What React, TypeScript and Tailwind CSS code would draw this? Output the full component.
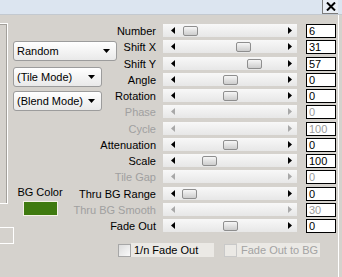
import React from 'react'

/* ── Data ──────────────────────────────────────────── */

type Row = { label: string; value: string; thumb?: number }

// thumb = offset of the slider knob from the track's left edge (px)
const ROWS: Row[] = [
  { label: 'Number', value: '6', thumb: 20 },
  { label: 'Shift X', value: '31', thumb: 73 },
  { label: 'Shift Y', value: '57', thumb: 84 },
  { label: 'Angle', value: '0', thumb: 60 },
  { label: 'Rotation', value: '0', thumb: 60 },
  { label: 'Phase', value: '0' },
  { label: 'Cycle', value: '100' },
  { label: 'Attenuation', value: '0', thumb: 60 },
  { label: 'Scale', value: '100', thumb: 39 },
  { label: 'Tile Gap', value: '0' },
  { label: 'Thru BG Range', value: '0', thumb: 19 },
  { label: 'Thru BG Smooth', value: '30' },
  { label: 'Fade Out', value: '0', thumb: 60 },
]

/* ── Bits ──────────────────────────────────────────── */

function Arrow({ dir, muted }: { dir: 'left' | 'right'; muted?: boolean }) {
  const fill = muted ? '#a8a8a8' : '#000'
  return (
    <svg width="4" height="7" viewBox="0 0 4 7" className="shrink-0">
      {dir === 'left' ? <path d="M4 0 L0 3.5 L4 7 Z" fill={fill} /> : <path d="M0 0 L4 3.5 L0 7 Z" fill={fill} />}
    </svg>
  )
}

function Select({ label, width }: { label: string; width: string }) {
  return (
    <div className={`flex h-[20px] ${width} items-center justify-between rounded-[3px] border border-[#9c9c9c] bg-linear-to-b from-white to-[#e9e9e9] pl-[3px] pr-[6px] text-black`}>
      <span className="whitespace-nowrap">{label}</span>
      <svg width="7" height="4" viewBox="0 0 7 4" className="shrink-0">
        <path d="M0 0 H7 L3.5 4 Z" fill="#000" />
      </svg>
    </div>
  )
}

function SliderRow({ row }: { row: Row }) {
  const disabled = row.thumb === undefined
  return (
    <div className="flex h-[16.25px] items-start">
      <div className={`w-[86px] shrink-0 whitespace-nowrap text-right leading-[14px] ${disabled ? 'text-[#a0a0a0]' : 'text-black'}`}>
        {row.label}
      </div>
      <div className="relative ml-[7px] flex h-[13px] w-[134px] shrink-0 items-center justify-between bg-linear-to-b from-[#f8f8f8] to-[#e7e7e7] pl-[8px] pr-[5px]">
        <Arrow dir="left" muted={disabled} />
        <Arrow dir="right" muted={disabled} />
        {!disabled && (
          <div
            className="absolute top-[2px] h-[10px] w-[15px] rounded-[2px] border border-[#8e8e8e] bg-linear-to-b from-[#f6f6f6] to-[#cdcdcd]"
            style={{ left: row.thumb }}
          />
        )}
      </div>
      <div className={`ml-[9px] h-[14px] w-[30px] shrink-0 border border-black bg-white pl-[2px] leading-[12px] ${disabled ? 'text-[#9a9a9a]' : 'text-black'}`}>
        {row.value}
      </div>
    </div>
  )
}

/* ── Page ──────────────────────────────────────────── */

export default function App() {
  return (
    <div
      className="flex h-[277px] w-[342px] flex-col overflow-hidden bg-[#d5d2cd] text-[11px]"
      style={{ fontFamily: '"Liberation Sans", Arial, sans-serif' }}
    >
      {/* Title band */}
      <div className="flex h-[15px] shrink-0 justify-end border-b border-[#c3c9d0] bg-[#dce5f0]">
        <div className="mr-[4px] flex h-[14px] w-[16px] items-center justify-center border-b border-l border-[#7d7d7d] bg-[#e9eef5]">
          <svg width="10" height="9" viewBox="0 0 10 9">
            <path d="M1 0.5 L9 8.5 M9 0.5 L1 8.5" stroke="#000" strokeWidth="2" />
          </svg>
        </div>
      </div>

      <div className="flex flex-1">
        {/* Left column (dropdowns overhang into the label gutter) */}
        <div className="relative z-10 flex w-[70px] shrink-0 flex-col">
          <div className="flex">
            <div className="mt-[8px] h-[181px] w-[8px] shrink-0 border-y border-r border-white shadow-[inset_-1px_1px_0_#a3a09b]" />
            <div className="ml-[5px] mt-[26px] flex flex-col">
              <Select label="Random" width="w-[104px]" />
              <div className="mt-[6px]">
                <Select label="(Tile Mode)" width="w-[89px]" />
              </div>
              <div className="mt-[4px]">
                <Select label="(Blend Mode)" width="w-[89px]" />
              </div>
              <div className="mt-[74px] flex w-[54px] flex-col items-center">
                <span className="whitespace-nowrap leading-[14px] text-black">BG Color</span>
                <div className="mt-[2px] h-[15px] w-[35px] border border-[#f4f2e6] bg-[#3f7a0f]" />
              </div>
            </div>
          </div>
          <div className="mt-[11px] h-[17px] w-[14px] border-y border-r border-white" />
        </div>

        {/* Sliders */}
        <div className="flex w-[266px] shrink-0 flex-col pt-[9px]">
          {ROWS.map((row) => (
            <SliderRow key={row.label} row={row} />
          ))}

          <div className="ml-[48px] mt-[8px] flex items-center">
            <div className="h-[13px] w-[13px] border border-[#a7a7a7] bg-linear-to-br from-[#dcdcdc] to-[#fafafa]" />
            <div className="h-[14px] w-[83px] bg-[#ebe9e5] pl-[3px] leading-[14px] text-black">1/n Fade Out</div>
            <div className="ml-[10px] h-[13px] w-[13px] border border-[#c9c9c9] bg-[#ebe9e5]" />
            <div className="h-[14px] w-[83px] bg-[#ebe9e5] pl-[4px] leading-[14px] text-[#a3a3a3]">Fade Out to BG</div>
          </div>
        </div>

        <div className="ml-[2px] w-px bg-white" />
      </div>
    </div>
  )
}
